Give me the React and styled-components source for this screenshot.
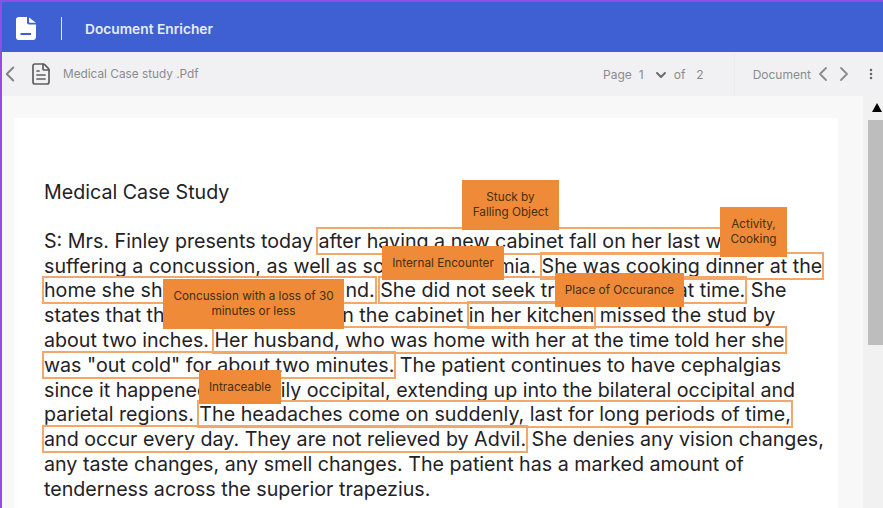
import { ChevronDown, ChevronLeft, ChevronRight, FileText, MoreVertical } from "lucide-react";
import styled, { createGlobalStyle } from "styled-components";

const GlobalStyle = createGlobalStyle`
  html, body {
    margin: 0;
    height: 100%;
    overflow: hidden;
    font-family: Inter, "Liberation Sans", sans-serif;
  }
`;

const tags = [
  { label: "Stuck by\nFalling Object", x: 448, y: 62, w: 97, h: 50 },
  { label: "Activity,\nCooking", x: 706, y: 89, w: 67, h: 50 },
  { label: "Internal Encounter", x: 368, y: 128, w: 122, h: 34 },
  { label: "Place of Occurance", x: 541, y: 155, w: 129, h: 34 },
  { label: "Concussion with a loss of 30\nminutes or less", x: 149, y: 161, w: 181, h: 50 },
  { label: "Intraceable", x: 185, y: 252, w: 82, h: 34 },
];

const App = () => {
  return (
    <>
      <GlobalStyle />
      <Frame>
        <Header>
          <Logo viewBox="0 0 20 23">
            <path
              fillRule="evenodd"
              d="M2.5 0H11V5.5C11 6.6 11.9 7.5 13 7.5H20V20C20 21.7 18.7 23 17 23H2.5C1 23 0 21.8 0 20.5V2.5C0 1.1 1.1 0 2.5 0ZM4.5 16V18H15V16ZM13 0.5L20 5.8H13.5C13.2 5.8 13 5.6 13 5.3Z"
              fill="#fff"
            />
          </Logo>
          <HeaderDivider />
          <AppTitle>Document Enricher</AppTitle>
        </Header>

        <Toolbar>
          <BackButton>
            <ChevronLeft size={26} strokeWidth={1.7} />
          </BackButton>
          <FileIcon>
            <FileText size={24} strokeWidth={1.7} />
          </FileIcon>
          <FileName>Medical Case study .Pdf</FileName>

          <PagePicker>
            <span>Page</span>
            <span>1</span>
            <ChevronDown size={16} strokeWidth={3} />
            <span>of</span>
            <span>2</span>
          </PagePicker>

          <DocumentNav>
            <span>Document</span>
            <ChevronLeft size={24} strokeWidth={1.8} />
            <ChevronRight size={24} strokeWidth={1.8} />
            <MoreVertical size={14} strokeWidth={2.4} />
          </DocumentNav>
        </Toolbar>

        <Body>
          <Viewer>
            <Paper>
              <Title>Medical Case Study</Title>
              <Line>
                S: Mrs. Finley presents today <Mark>after having a new cabinet fall on her last week</Mark>
              </Line>
              <Line>
                suffering a concussion, as well as some mild anemia. <Mark>She was cooking dinner at the</Mark>
              </Line>
              <Line>
                <Mark>home she shares with her husband.</Mark> <Mark>She did not seek treatment at that time.</Mark> She
              </Line>
              <Line>
                states that the end of the door on the cabinet <Mark>in her kitchen</Mark> missed the stud by
              </Line>
              <Line>
                about two inches. <Mark>Her husband, who was home with her at the time told her she</Mark>
              </Line>
              <Line>
                <Mark>was "out cold" for about two minutes.</Mark> The patient continues to have cephalgias
              </Line>
              <Line>since it happened, primarily occipital, extending up into the bilateral occipital and</Line>
              <Line>
                parietal regions. <Mark>The headaches come on suddenly, last for long periods of time,</Mark>
              </Line>
              <Line>
                <Mark>and occur every day. They are not relieved by Advil.</Mark> She denies any vision changes,
              </Line>
              <Line>any taste changes, any smell changes. The patient has a marked amount of</Line>
              <Line>tenderness across the superior trapezius.</Line>

              {tags.map((tag) => (
                <Tag key={tag.label} $x={tag.x} $y={tag.y} $w={tag.w} $h={tag.h}>
                  {tag.label}
                </Tag>
              ))}
            </Paper>
          </Viewer>
          <ScrollTrack>
            <ScrollArrow />
            <ScrollThumb />
          </ScrollTrack>
        </Body>
      </Frame>
    </>
  );
};

export default App;

const Frame = styled.div`
  display: flex;
  flex-direction: column;
  height: 100vh;
  box-sizing: border-box;
  border-top: 2px solid #8f4fe6;
  border-left: 2px solid #8f4fe6;
  overflow: hidden;
  background: #f8f8f8;
`;

const Header = styled.header`
  display: flex;
  align-items: center;
  flex: 0 0 50px;
  box-sizing: border-box;
  padding: 2px 0 0 14px;
  background: #3e60d2;
`;

const Logo = styled.svg`
  width: 20px;
  height: 23px;
`;

const HeaderDivider = styled.div`
  width: 1px;
  height: 23px;
  margin-left: 25px;
  background: #e3e8fa;
`;

const AppTitle = styled.div`
  margin-left: 23px;
  padding-top: 1px;
  font-size: 13.75px;
  font-weight: 600;
  color: #e6ebfb;
`;

const Toolbar = styled.div`
  display: flex;
  align-items: center;
  flex: 0 0 44px;
  font-size: 12px;
  color: #8b8b8d;
  background: #f1f1f3;
`;

const BackButton = styled.div`
  display: flex;
  margin-left: -5px;
  color: #808082;
`;

const FileIcon = styled.div`
  display: flex;
  margin-left: 6px;
  color: #5f5f61;
`;

const FileName = styled.div`
  margin-left: 10px;
  font-size: 11.8px;
`;

const PagePicker = styled.div`
  display: flex;
  align-items: center;
  gap: 7px;
  margin-left: auto;
  padding-right: 30px;
  align-self: stretch;
  border-right: 1px solid #ececee;

  svg {
    margin: 1px -2px 0 2px;
    color: #6d6d6f;
  }

  span:last-child {
    margin-left: 4px;
  }
`;

const DocumentNav = styled.div`
  display: flex;
  align-items: center;
  padding: 0 5px 0 18px;

  svg:nth-of-type(2) {
    margin-left: -3px;
  }

  svg:nth-of-type(3) {
    margin-left: 8px;
    color: #666;
  }
`;

const Body = styled.div`
  display: flex;
  flex: 1;
  min-height: 0;
`;

const Viewer = styled.main`
  flex: 1;
  min-width: 0;
  padding: 22px 25px 0 12px;
`;

const Paper = styled.div`
  position: relative;
  height: 100%;
  box-sizing: border-box;
  padding: 62px 0 0 30px;
  background: #fff;
  color: #1f2226;
  font-size: 19.66px;
  line-height: 24.8px;
`;

const Title = styled.h1`
  margin: 0 0 24px;
  font-size: 19.66px;
  font-weight: 400;
  line-height: 24.8px;
`;

const Line = styled.div`
  white-space: nowrap;
`;

const Mark = styled.span`
  outline: 2px solid #f3a869;
  outline-offset: 0;
`;

const Tag = styled.div`
  position: absolute;
  left: ${(p) => p.$x}px;
  top: ${(p) => p.$y}px;
  display: flex;
  align-items: center;
  justify-content: center;
  width: ${(p) => p.$w}px;
  height: ${(p) => p.$h}px;
  box-sizing: border-box;
  font-size: 11.75px;
  line-height: 15px;
  text-align: center;
  white-space: pre-line;
  color: #44300f;
  background: #ef8a38;
`;

const ScrollTrack = styled.div`
  flex: 0 0 20px;
  box-sizing: border-box;
  padding-left: 5px;
  background: #f1f1f1;
`;

const ScrollArrow = styled.div`
  width: 0;
  height: 0;
  margin: 7px 0 0 4px;
  border-left: 5.5px solid transparent;
  border-right: 5.5px solid transparent;
  border-bottom: 9px solid #000;
`;

const ScrollThumb = styled.div`
  height: 225px;
  margin-top: 8px;
  background: #bdbdbd;
`;
